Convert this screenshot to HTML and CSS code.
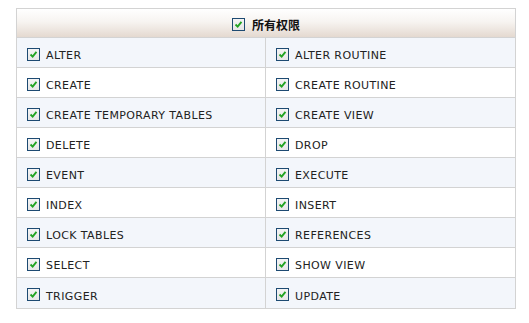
FILE: index.html
```html
<!DOCTYPE html>
<html>
<head>
    <title>权限</title>
    <link rel="stylesheet" href="styles.css">
</head>
<body>
    <div class="privs">
        <div class="privs-head">
            <span class="cb"><svg viewBox="0 0 13 13"><path d="M3 6.5 L5.5 9 L10 3.5" /></svg></span>
            <span class="head-text">所有权限</span>
        </div>
        <div class="privs-grid">
            <div class="cell odd"><span class="cb"><svg viewBox="0 0 13 13"><path d="M3 6.5 L5.5 9 L10 3.5" /></svg></span>ALTER</div>
            <div class="cell odd"><span class="cb"><svg viewBox="0 0 13 13"><path d="M3 6.5 L5.5 9 L10 3.5" /></svg></span>ALTER ROUTINE</div>
            <div class="cell"><span class="cb"><svg viewBox="0 0 13 13"><path d="M3 6.5 L5.5 9 L10 3.5" /></svg></span>CREATE</div>
            <div class="cell"><span class="cb"><svg viewBox="0 0 13 13"><path d="M3 6.5 L5.5 9 L10 3.5" /></svg></span>CREATE ROUTINE</div>
            <div class="cell odd"><span class="cb"><svg viewBox="0 0 13 13"><path d="M3 6.5 L5.5 9 L10 3.5" /></svg></span>CREATE TEMPORARY TABLES</div>
            <div class="cell odd"><span class="cb"><svg viewBox="0 0 13 13"><path d="M3 6.5 L5.5 9 L10 3.5" /></svg></span>CREATE VIEW</div>
            <div class="cell"><span class="cb"><svg viewBox="0 0 13 13"><path d="M3 6.5 L5.5 9 L10 3.5" /></svg></span>DELETE</div>
            <div class="cell"><span class="cb"><svg viewBox="0 0 13 13"><path d="M3 6.5 L5.5 9 L10 3.5" /></svg></span>DROP</div>
            <div class="cell odd"><span class="cb"><svg viewBox="0 0 13 13"><path d="M3 6.5 L5.5 9 L10 3.5" /></svg></span>EVENT</div>
            <div class="cell odd"><span class="cb"><svg viewBox="0 0 13 13"><path d="M3 6.5 L5.5 9 L10 3.5" /></svg></span>EXECUTE</div>
            <div class="cell"><span class="cb"><svg viewBox="0 0 13 13"><path d="M3 6.5 L5.5 9 L10 3.5" /></svg></span>INDEX</div>
            <div class="cell"><span class="cb"><svg viewBox="0 0 13 13"><path d="M3 6.5 L5.5 9 L10 3.5" /></svg></span>INSERT</div>
            <div class="cell odd"><span class="cb"><svg viewBox="0 0 13 13"><path d="M3 6.5 L5.5 9 L10 3.5" /></svg></span>LOCK TABLES</div>
            <div class="cell odd"><span class="cb"><svg viewBox="0 0 13 13"><path d="M3 6.5 L5.5 9 L10 3.5" /></svg></span>REFERENCES</div>
            <div class="cell"><span class="cb"><svg viewBox="0 0 13 13"><path d="M3 6.5 L5.5 9 L10 3.5" /></svg></span>SELECT</div>
            <div class="cell"><span class="cb"><svg viewBox="0 0 13 13"><path d="M3 6.5 L5.5 9 L10 3.5" /></svg></span>SHOW VIEW</div>
            <div class="cell odd"><span class="cb"><svg viewBox="0 0 13 13"><path d="M3 6.5 L5.5 9 L10 3.5" /></svg></span>TRIGGER</div>
            <div class="cell odd"><span class="cb"><svg viewBox="0 0 13 13"><path d="M3 6.5 L5.5 9 L10 3.5" /></svg></span>UPDATE</div>
        </div>
    </div>
</body>
</html>
```

FILE: styles.css
```css
body {
    margin: 0;
    padding: 8px 13px 0 16px;
    background-color: #ffffff;
    font-family: "DejaVu Sans", Verdana, sans-serif;
    font-size: 11px;
    letter-spacing: 0.4px;
    color: #222;
}
.privs {
    width: 500px;
    border: 1px solid #d3d3d3;
    box-sizing: border-box;
}
.privs-head {
    height: 29px;
    box-sizing: border-box;
    display: flex;
    align-items: center;
    justify-content: center;
    padding-top: 3px;
    background: linear-gradient(#ffffff 0%, #f7f4f1 45%, #e4d9d0 100%);
    border-bottom: 1px solid #d3d3d3;
}
.head-text {
    font-family: "Noto Sans CJK SC", sans-serif;
    font-weight: bold;
    font-size: 12px;
    letter-spacing: 0;
    margin-left: 7px;
    color: #111;
}
.privs-grid {
    display: grid;
    grid-template-columns: 249px 249px;
}
.cell {
    height: 30px;
    box-sizing: border-box;
    display: flex;
    align-items: center;
    padding-left: 10px;
    padding-top: 6px;
    border-bottom: 1px solid #d3d3d3;
    background: #ffffff;
}
.cell:nth-child(odd) {
    border-right: 1px solid #d3d3d3;
}
.cell:nth-last-child(-n+2) {
    border-bottom: none;
}
.cell.odd {
    background: #f3f6fb;
}
.cb {
    width: 11px;
    height: 11px;
    border: 1px solid #1d4a72;
    background: linear-gradient(#f4f4f4, #e6e6e6);
    margin-right: 6px;
    margin-top: -3px;
    display: inline-block;
    flex: none;
}
.cb svg {
    display: block;
    width: 11px;
    height: 11px;
}
.cb path {
    fill: none;
    stroke: #21a321;
    stroke-width: 2.2;
}
.privs-head .cb {
    margin-right: 0;
    margin-top: 0;
}
```
